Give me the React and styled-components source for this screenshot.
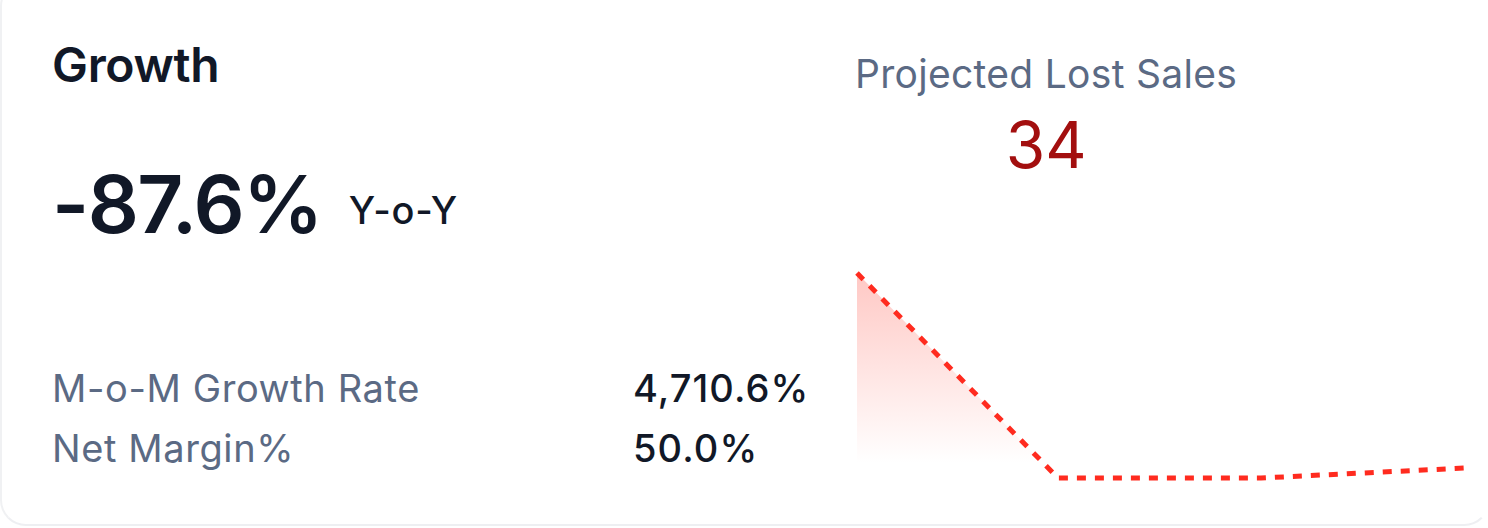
import React from 'react';
import styled, { createGlobalStyle } from 'styled-components';

const GlobalStyle = createGlobalStyle`
  html, body {
    margin: 0;
    padding: 0;
    background: #ffffff;
    overflow: hidden;
  }
  body {
    font-family: Inter, "Noto Sans", "Liberation Sans", sans-serif;
    -webkit-font-smoothing: antialiased;
  }
`;

const Card = styled.div`
  box-sizing: border-box;
  width: 1490px;
  height: 546px;
  margin-top: -20px;
  border: 2px solid;
  border-color: transparent transparent #eeeff2 #f0f1f3;
  border-radius: 26px;
  background: #ffffff;
  padding: 59px 0 0 50px;
  display: grid;
  grid-template-columns: 753px 610px;
  column-gap: 50px;
`;

const LeftCol = styled.div`
  display: flex;
  flex-direction: column;
`;

const Title = styled.div`
  font-size: 48px;
  line-height: 48px;
  font-weight: 600;
  color: #111827;
  letter-spacing: -0.3px;
`;

const Headline = styled.div`
  display: flex;
  align-items: flex-end;
  gap: 27px;
  margin-top: 75px;
`;

const BigValue = styled.div`
  font-size: 80px;
  line-height: 80px;
  font-weight: 600;
  color: #111827;
  letter-spacing: -1.6px;
`;

const Period = styled.div`
  font-size: 38px;
  line-height: 38px;
  font-weight: 500;
  color: #111827;
  letter-spacing: 0.8px;
  padding-bottom: 15px;
`;

const Metrics = styled.div`
  display: grid;
  grid-template-columns: 581px auto;
  margin-top: 114px;
`;

const MetricLabel = styled.div`
  font-size: 38px;
  line-height: 60px;
  font-weight: 400;
  color: #5b6a84;
  letter-spacing: 0.6px;
`;

const MetricValue = styled.div`
  font-size: 38px;
  line-height: 60px;
  font-weight: 500;
  color: #111827;
  letter-spacing: 1.1px;
`;

const RightCol = styled.div`
  display: flex;
  flex-direction: column;
  align-items: flex-start;
`;

const Projection = styled.div`
  display: flex;
  flex-direction: column;
  align-items: center;
  margin-top: 13px;
`;

const ProjectionLabel = styled.div`
  font-size: 39px;
  line-height: 39px;
  font-weight: 400;
  color: #5b6a84;
  letter-spacing: 0.3px;
`;

const ProjectionValue = styled.div`
  font-size: 64px;
  line-height: 64px;
  font-weight: 400;
  color: #a30f0f;
  margin-top: 20px;
`;

const Chart = styled.svg`
  display: block;
  margin-top: 86px;
`;

const points = [
  [2, 10],
  [203, 215],
  [406, 215],
  [610, 205],
];

const LostSalesChart = () => {
  const line = points.map(([x, y], i) => `${i ? 'L' : 'M'}${x} ${y}`).join(' ');
  const area = `${line} L610 220 L2 220 Z`;
  return (
    <Chart width="612" height="220" viewBox="0 0 612 220">
      <defs>
        <linearGradient id="lostFill" x1="0" y1="0" x2="0" y2="200" gradientUnits="userSpaceOnUse">
          <stop offset="0" stopColor="#ff4a3d" stopOpacity="0.32" />
          <stop offset="1" stopColor="#ff4a3d" stopOpacity="0" />
        </linearGradient>
      </defs>
      <path d={area} fill="url(#lostFill)" />
      <path
        d={line}
        fill="none"
        stroke="#ff2b1f"
        strokeWidth="5"
        strokeDasharray="9 9"
        strokeLinejoin="round"
      />
    </Chart>
  );
};

const App = () => {
  const metrics = [
    { label: 'M-o-M Growth Rate', value: '4,710.6%' },
    { label: 'Net Margin%', value: '50.0%' },
  ];

  return (
    <>
      <GlobalStyle />
      <Card>
        <LeftCol>
          <Title>Growth</Title>
          <Headline>
            <BigValue>-87.6%</BigValue>
            <Period>Y-o-Y</Period>
          </Headline>
          <Metrics>
            {metrics.map((m) => (
              <React.Fragment key={m.label}>
                <MetricLabel>{m.label}</MetricLabel>
                <MetricValue>{m.value}</MetricValue>
              </React.Fragment>
            ))}
          </Metrics>
        </LeftCol>
        <RightCol>
          <Projection>
            <ProjectionLabel>Projected Lost Sales</ProjectionLabel>
            <ProjectionValue>34</ProjectionValue>
          </Projection>
          <LostSalesChart />
        </RightCol>
      </Card>
    </>
  );
};

export default App;
